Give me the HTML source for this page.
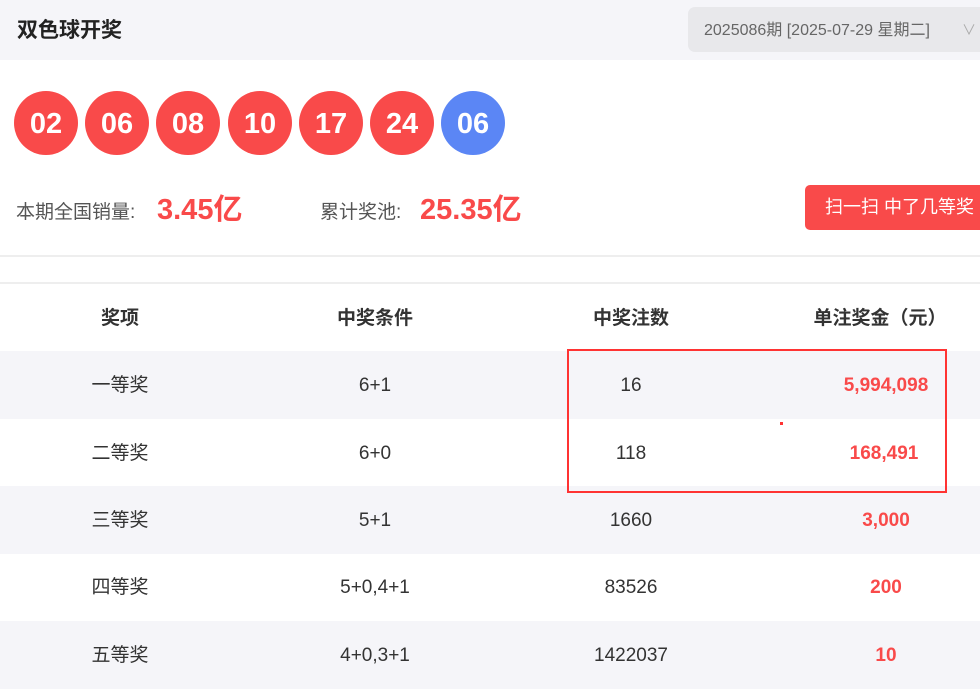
<!DOCTYPE html>
<html><head><meta charset="utf-8"><style>
*{margin:0;padding:0;box-sizing:border-box}
body{width:980px;height:700px;overflow:hidden;background:#fff;font-family:"Liberation Sans","Noto Sans CJK SC",sans-serif;color:#333;position:relative}
.a{position:absolute;white-space:nowrap}
.hdr{left:0;top:0;width:980px;height:60px;background:#f5f5f9}
.ball{position:absolute;top:91px;width:64px;height:64px;border-radius:50%;background:#f94a4a;color:#fff;font-weight:bold;font-size:29px;line-height:66px;text-align:center}
.row{position:absolute;left:0;width:980px;height:68px}
.c{position:absolute;top:1px;width:200px;margin-left:-100px;text-align:center;font-size:19px;line-height:68px;height:68px}
.r{color:#f94a4a;font-weight:bold}
</style></head><body>
<div class="a hdr"></div>
<div class="a" style="left:17px;top:16px;font-size:21px;line-height:30px;font-weight:bold;color:#222">双色球开奖</div>
<div class="a" style="left:688px;top:7px;width:300px;height:45px;background:#e8e8eb;border-radius:7px"></div>
<div class="a" style="left:704px;top:8px;font-size:16px;line-height:45px;color:#666">2025086期 [2025-07-29 星期二]</div>
<div class="a" style="left:962px;top:8px;font-size:14px;line-height:45px;color:#aaa">∨</div>
<div class="ball" style="left:14px">02</div>
<div class="ball" style="left:85px">06</div>
<div class="ball" style="left:156px">08</div>
<div class="ball" style="left:228px">10</div>
<div class="ball" style="left:299px">17</div>
<div class="ball" style="left:370px">24</div>
<div class="ball" style="left:441px;background:#5b86f5">06</div>
<div class="a" style="left:16px;top:195px;font-size:19px;line-height:36px;color:#555">本期全国销量:</div>
<div class="a r" style="left:157px;top:192px;font-size:29px;line-height:36px">3.45亿</div>
<div class="a" style="left:320px;top:195px;font-size:19px;line-height:36px;color:#555">累计奖池:</div>
<div class="a r" style="left:420px;top:192px;font-size:29px;line-height:36px">25.35亿</div>
<div class="a" style="left:805px;top:185px;width:180px;height:45px;background:#f94a4a;border-radius:5px;color:#fff;font-size:18px;line-height:45px;padding-left:20px">扫一扫 中了几等奖</div>
<div class="a" style="left:0;top:255px;width:980px;height:2px;background:#eee"></div>
<div class="a" style="left:0;top:282px;width:980px;height:2px;background:#eee"></div>
<div class="row" style="top:284px"><div class="c" style="left:120px;font-weight:bold">奖项</div><div class="c" style="left:375px;font-weight:bold">中奖条件</div><div class="c" style="left:631px;font-weight:bold">中奖注数</div><div class="c" style="left:880px;font-weight:bold">单注奖金（元）</div></div>
<div class="row" style="top:351px;background:#f5f5f9"><div class="c" style="left:120px">一等奖</div><div class="c" style="left:375px">6+1</div><div class="c" style="left:631px">16</div><div class="c r" style="left:886px">5,994,098</div></div>
<div class="row" style="top:419px"><div class="c" style="left:120px">二等奖</div><div class="c" style="left:375px">6+0</div><div class="c" style="left:631px">118</div><div class="c r" style="left:884px">168,491</div></div>
<div class="row" style="top:486px;background:#f5f5f9"><div class="c" style="left:120px">三等奖</div><div class="c" style="left:375px">5+1</div><div class="c" style="left:631px">1660</div><div class="c r" style="left:886px">3,000</div></div>
<div class="row" style="top:553px"><div class="c" style="left:120px">四等奖</div><div class="c" style="left:375px">5+0,4+1</div><div class="c" style="left:631px">83526</div><div class="c r" style="left:886px">200</div></div>
<div class="row" style="top:621px;background:#f5f5f9"><div class="c" style="left:120px">五等奖</div><div class="c" style="left:375px">4+0,3+1</div><div class="c" style="left:631px">1422037</div><div class="c r" style="left:886px">10</div></div>
<div class="a" style="left:567px;top:349px;width:380px;height:144px;border:2px solid #f33"></div>
<div class="a" style="left:780px;top:422px;width:3px;height:3px;background:#f33"></div>
</body></html>
